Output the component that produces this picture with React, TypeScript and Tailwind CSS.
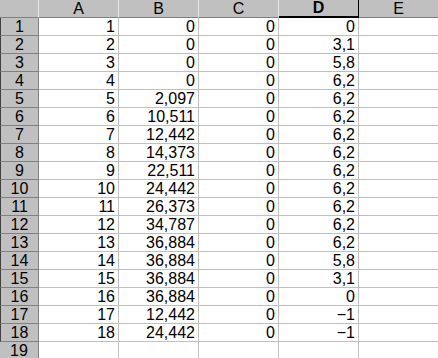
import React from 'react';

const cols = ['A', 'B', 'C', 'D', 'E'];

const rows: string[][] = [
  ['1', '0', '0', '0'],
  ['2', '0', '0', '3,1'],
  ['3', '0', '0', '5,8'],
  ['4', '0', '0', '6,2'],
  ['5', '2,097', '0', '6,2'],
  ['6', '10,511', '0', '6,2'],
  ['7', '12,442', '0', '6,2'],
  ['8', '14,373', '0', '6,2'],
  ['9', '22,511', '0', '6,2'],
  ['10', '24,442', '0', '6,2'],
  ['11', '26,373', '0', '6,2'],
  ['12', '34,787', '0', '6,2'],
  ['13', '36,884', '0', '6,2'],
  ['14', '36,884', '0', '5,8'],
  ['15', '36,884', '0', '3,1'],
  ['16', '36,884', '0', '0'],
  ['17', '12,442', '0', '−1'],
  ['18', '24,442', '0', '−1'],
  ['', '', '', ''],
];

const App: React.FC = () => {
  return (
    <div className="w-[438px] h-[358px] overflow-hidden bg-white font-['Liberation_Sans',Arial,sans-serif] text-[16px] leading-none text-black">
      {/* column headers */}
      <div className="flex h-[18px]">
        <div className="w-[39px] shrink-0 bg-[#c0c0c0] border-r border-r-[#e8e8e8] border-b border-b-[#808080]" />
        {cols.map((c) => (
          <div
            key={c}
            className={`w-[80px] shrink-0 bg-[#c0c0c0] flex items-center justify-center border-r border-b ${
              c === 'D' ? 'font-bold border-r-black border-b-black border-b-2' : 'border-r-[#e8e8e8] border-b-[#808080]'
            }`}
          >
            {c}
          </div>
        ))}
      </div>

      {rows.map((r, i) => (
        <div key={i} className="flex h-[18px]">
          <div
            className={`w-[39px] shrink-0 bg-[#c0c0c0] flex items-center justify-center border-b border-b-[#808080] border-r border-r-[#808080] ${
              i < 18 ? 'border-l border-l-[#404040]' : ''
            }`}
          >
            {i + 1}
          </div>
          {[0, 1, 2, 3, 4].map((j) => (
            <div
              key={j}
              className="w-[80px] shrink-0 flex items-center justify-end pr-[3px] border-r border-b border-[#c0c0c0]"
            >
              {r[j] ?? ''}
            </div>
          ))}
        </div>
      ))}
    </div>
  );
};

export default App;
